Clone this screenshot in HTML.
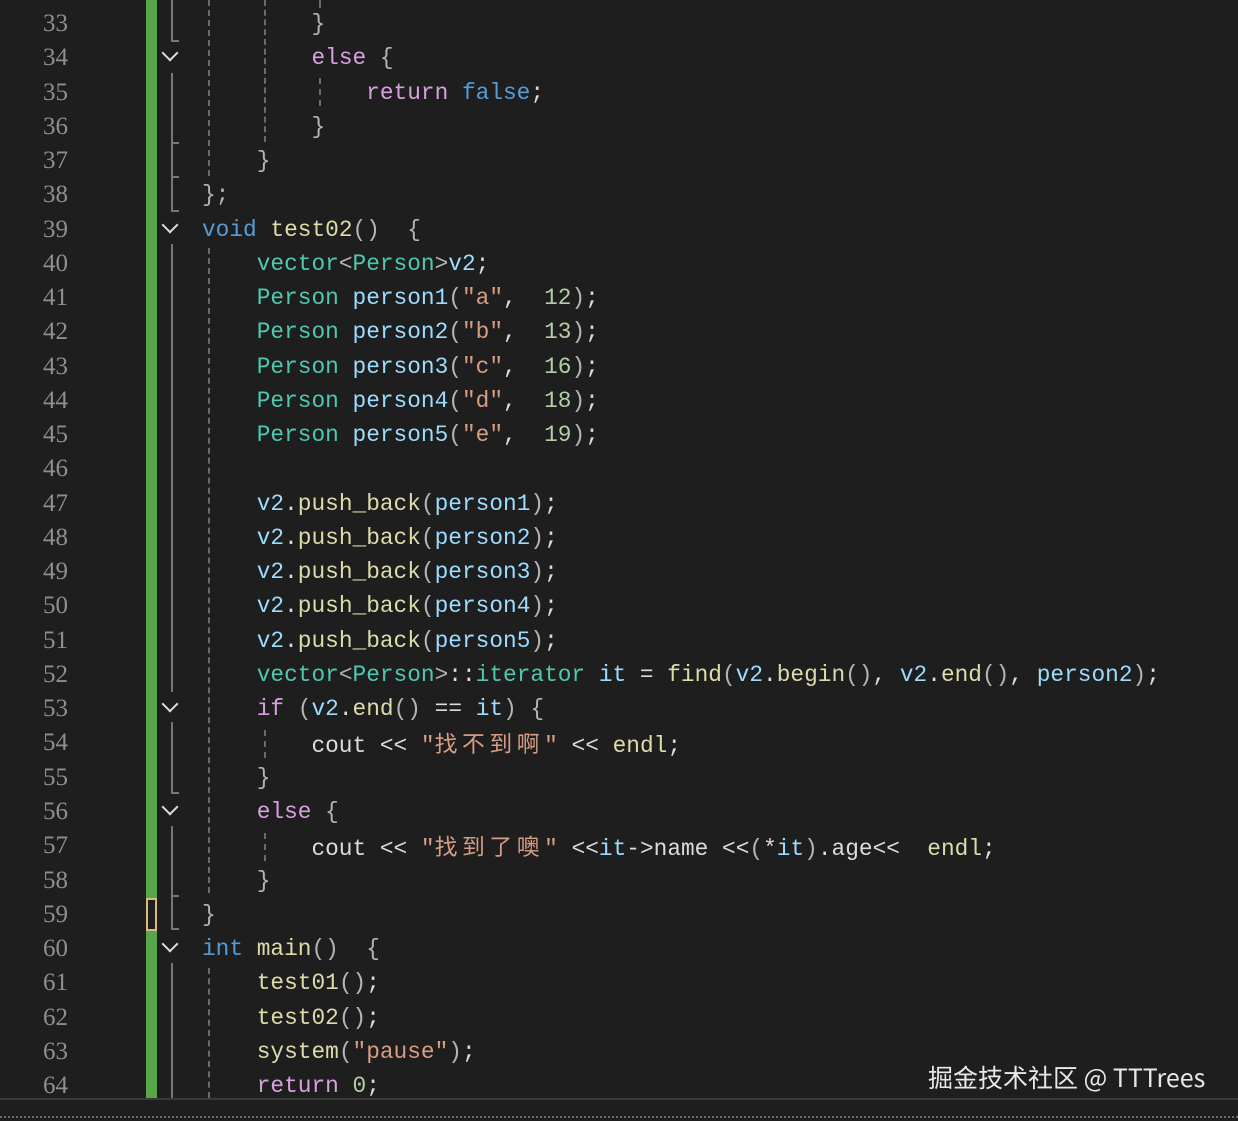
<!DOCTYPE html>
<html><head><meta charset="utf-8"><style>
html,body{margin:0;padding:0;background:#1e1e1e;width:1238px;height:1121px;overflow:hidden;position:relative}
.ln{position:absolute;left:0;width:68px;text-align:right;font:25px/34.26px "Liberation Serif",serif;color:#8f8f8f}
.c{position:absolute;left:202px;white-space:pre;font:22.8px/34.26px "Liberation Mono","Noto Sans CJK SC",monospace;color:#dcdcdc;-webkit-font-smoothing:antialiased}
.k{color:#569cd6}.p{color:#d8a0df}.t{color:#4ec9b0}.f{color:#dcdcaa}.v{color:#9cdcfe}.s{color:#d69d85}.n{color:#b5cea8}.g{color:#b4b4b4}
.cj{font-family:"Noto Sans CJK SC",sans-serif;letter-spacing:4.6px}
.vl{position:absolute;width:0;border-left:2px solid #777}
.dl{position:absolute;width:0;border-left:2px dashed #6a6a6a}
.tk{position:absolute;height:0;width:8px;border-top:2px solid #777}
.ch{position:absolute;left:164px;width:10px;height:10px;border-right:2px solid #ddd;border-bottom:2px solid #ddd;transform:rotate(45deg)}
</style></head><body>
<div style="position:absolute;left:146px;top:0;width:11px;height:1098px;background:#57a64a"></div>
<div style="position:absolute;left:146px;top:898px;width:7px;height:29px;border:2px solid #d7ba7d;background:#1e1e1e"></div>
<div id="nums"></div>
<div class="vl" style="left:171px;top:0;height:40px"></div><div class="tk" style="left:171px;top:40px"></div>
<div class="vl" style="left:171px;top:73px;height:70px"></div><div class="tk" style="left:171px;top:142px"></div>
<div class="vl" style="left:171px;top:143px;height:34px"></div><div class="tk" style="left:171px;top:176px"></div>
<div class="vl" style="left:171px;top:177px;height:34px"></div><div class="tk" style="left:171px;top:210px"></div>
<div class="vl" style="left:171px;top:244px;height:448px"></div>
<div class="vl" style="left:171px;top:722px;height:70px"></div><div class="tk" style="left:171px;top:792px"></div>
<div class="vl" style="left:171px;top:826px;height:70px"></div><div class="tk" style="left:171px;top:895px"></div>
<div class="vl" style="left:171px;top:896px;height:32px"></div><div class="tk" style="left:171px;top:928px"></div>
<div class="vl" style="left:171px;top:963px;height:135px"></div>
<div class="ch" style="top:47px"></div><div class="ch" style="top:219px"></div><div class="ch" style="top:698px"></div><div class="ch" style="top:801px"></div><div class="ch" style="top:938px"></div>
<div class="dl" style="left:208px;top:0;height:176px"></div>
<div class="dl" style="left:208px;top:248px;height:645px"></div>
<div class="dl" style="left:208px;top:968px;height:130px"></div>
<div class="dl" style="left:264px;top:0;height:142px"></div>
<div class="dl" style="left:319px;top:0;height:8px"></div>
<div class="dl" style="left:319px;top:78px;height:28px"></div>
<div class="dl" style="left:264px;top:730px;height:28px"></div>
<div class="dl" style="left:264px;top:833px;height:28px"></div>
<div id="code"></div>
<div style="position:absolute;left:0;top:1098px;width:1238px;height:2px;background:#3a3a3a"></div>
<div style="position:absolute;left:0;top:1116px;width:1238px;height:0;border-top:2px dotted #6a6a6a"></div>
<div style="position:absolute;left:928px;top:1059px;font:25px/36px 'Noto Sans CJK SC','Liberation Sans',sans-serif;color:#e8e8e8">掘金技术社区 @ TTTrees</div>
<script>
var L=[
'        <span class="g">}</span>',
'        <span class="p">else</span> <span class="g">{</span>',
'            <span class="p">return</span> <span class="k">false</span>;',
'        <span class="g">}</span>',
'    <span class="g">}</span>',
'<span class="g">};</span>',
'<span class="k">void</span> <span class="f">test02</span><span class="g">()</span>  <span class="g">{</span>',
'    <span class="t">vector</span><span class="g">&lt;</span><span class="t">Person</span><span class="g">&gt;</span><span class="v">v2</span>;',
'    <span class="t">Person</span> <span class="v">person1</span><span class="g">(</span><span class="s">"a"</span>,  <span class="n">12</span><span class="g">)</span>;',
'    <span class="t">Person</span> <span class="v">person2</span><span class="g">(</span><span class="s">"b"</span>,  <span class="n">13</span><span class="g">)</span>;',
'    <span class="t">Person</span> <span class="v">person3</span><span class="g">(</span><span class="s">"c"</span>,  <span class="n">16</span><span class="g">)</span>;',
'    <span class="t">Person</span> <span class="v">person4</span><span class="g">(</span><span class="s">"d"</span>,  <span class="n">18</span><span class="g">)</span>;',
'    <span class="t">Person</span> <span class="v">person5</span><span class="g">(</span><span class="s">"e"</span>,  <span class="n">19</span><span class="g">)</span>;',
'',
'    <span class="v">v2</span>.<span class="f">push_back</span><span class="g">(</span><span class="v">person1</span><span class="g">)</span>;',
'    <span class="v">v2</span>.<span class="f">push_back</span><span class="g">(</span><span class="v">person2</span><span class="g">)</span>;',
'    <span class="v">v2</span>.<span class="f">push_back</span><span class="g">(</span><span class="v">person3</span><span class="g">)</span>;',
'    <span class="v">v2</span>.<span class="f">push_back</span><span class="g">(</span><span class="v">person4</span><span class="g">)</span>;',
'    <span class="v">v2</span>.<span class="f">push_back</span><span class="g">(</span><span class="v">person5</span><span class="g">)</span>;',
'    <span class="t">vector</span><span class="g">&lt;</span><span class="t">Person</span><span class="g">&gt;</span>::<span class="t">iterator</span> <span class="v">it</span> = <span class="f">find</span><span class="g">(</span><span class="v">v2</span>.<span class="f">begin</span><span class="g">()</span>, <span class="v">v2</span>.<span class="f">end</span><span class="g">()</span>, <span class="v">person2</span><span class="g">)</span>;',
'    <span class="p">if</span> <span class="g">(</span><span class="v">v2</span>.<span class="f">end</span><span class="g">()</span> == <span class="v">it</span><span class="g">)</span> <span class="g">{</span>',
'        cout &lt;&lt; <span class="s">"<span class="cj">找不到啊</span>"</span> &lt;&lt; <span class="f">endl</span>;',
'    <span class="g">}</span>',
'    <span class="p">else</span> <span class="g">{</span>',
'        cout &lt;&lt; <span class="s">"<span class="cj">找到了噢</span>"</span> &lt;&lt;<span class="v">it</span>-&gt;name &lt;&lt;<span class="g">(</span>*<span class="v">it</span><span class="g">)</span>.age&lt;&lt;  <span class="f">endl</span>;',
'    <span class="g">}</span>',
'<span class="g">}</span>',
'<span class="k">int</span> <span class="f">main</span><span class="g">()</span>  <span class="g">{</span>',
'    <span class="f">test01</span><span class="g">()</span>;',
'    <span class="f">test02</span><span class="g">()</span>;',
'    <span class="f">system</span><span class="g">(</span><span class="s">"pause"</span><span class="g">)</span>;',
'    <span class="p">return</span> <span class="n">0</span>;'
];
var h='',c='';
for(var i=0;i<32;i++){var yy=(7+i*34.26).toFixed(2);
h+='<div class="ln" style="top:'+yy+'px">'+(33+i)+'</div>';
c+='<div class="c" style="top:'+yy+'px">'+L[i]+'</div>';}
document.getElementById('nums').outerHTML=h;
document.getElementById('code').outerHTML=c;
</script>
</body></html>
